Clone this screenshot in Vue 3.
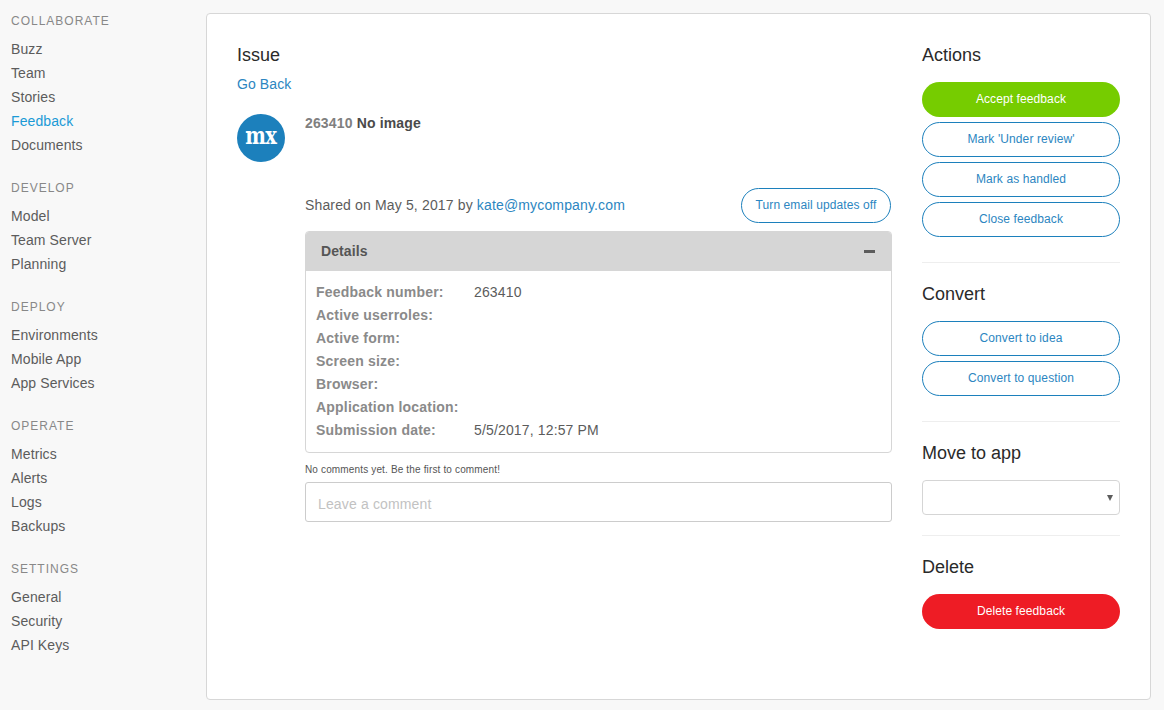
<template>
  <div class="page">
    <nav class="sidebar">
      <section v-for="group in navGroups" :key="group.title" class="nav-group">
        <h4>{{ group.title }}</h4>
        <a
          v-for="item in group.items"
          :key="item"
          href="#"
          :class="{ active: item === 'Feedback' }"
        >{{ item }}</a>
      </section>
    </nav>

    <main class="card">
      <div class="content">
        <h3 class="issue-title">Issue</h3>
        <a href="#" class="link back">Go Back</a>

        <div class="issue-head">
          <div class="avatar"><span>mx</span></div>
          <div class="issue-name"><span>263410</span> No image</div>
        </div>

        <div class="issue-body">
          <div class="shared">
            <p>Shared on May 5, 2017 by <a href="#" class="link">kate@mycompany.com</a></p>
            <button class="btn outline email">Turn email updates off</button>
          </div>

          <div class="panel">
            <div class="panel-head">
              <strong>Details</strong>
              <span class="collapse"></span>
            </div>
            <dl class="details">
              <template v-for="row in details" :key="row.label">
                <dt>{{ row.label }}</dt>
                <dd>{{ row.value }}</dd>
              </template>
            </dl>
          </div>

          <p class="no-comments">No comments yet. Be the first to comment!</p>
          <input class="comment" type="text" placeholder="Leave a comment" />
        </div>
      </div>

      <aside class="actions">
        <h3>Actions</h3>
        <div class="btn-stack">
          <button class="btn accept">Accept feedback</button>
          <button class="btn outline">Mark 'Under review'</button>
          <button class="btn outline">Mark as handled</button>
          <button class="btn outline">Close feedback</button>
        </div>
        <hr />
        <h3>Convert</h3>
        <div class="btn-stack">
          <button class="btn outline">Convert to idea</button>
          <button class="btn outline">Convert to question</button>
        </div>
        <hr />
        <h3>Move to app</h3>
        <div class="select-wrap">
          <select></select>
          <span class="caret"></span>
        </div>
        <hr class="tight" />
        <h3>Delete</h3>
        <button class="btn danger">Delete feedback</button>
      </aside>
    </main>
  </div>
</template>

<script setup>
const navGroups = [
  { title: 'COLLABORATE', items: ['Buzz', 'Team', 'Stories', 'Feedback', 'Documents'] },
  { title: 'DEVELOP', items: ['Model', 'Team Server', 'Planning'] },
  { title: 'DEPLOY', items: ['Environments', 'Mobile App', 'App Services'] },
  { title: 'OPERATE', items: ['Metrics', 'Alerts', 'Logs', 'Backups'] },
  { title: 'SETTINGS', items: ['General', 'Security', 'API Keys'] }
]

const details = [
  { label: 'Feedback number:', value: '263410' },
  { label: 'Active userroles:', value: '' },
  { label: 'Active form:', value: '' },
  { label: 'Screen size:', value: '' },
  { label: 'Browser:', value: '' },
  { label: 'Application location:', value: '' },
  { label: 'Submission date:', value: '5/5/2017, 12:57 PM' }
]
</script>

<style>
body {
  background: #f8f8f8;
}
</style>

<style scoped>
.page {
  display: flex;
  align-items: flex-start;
  padding: 13px 13px 10px 0;
  font-family: 'Liberation Sans', Arial, sans-serif;
  font-size: 14px;
  letter-spacing: 0.1px;
  color: #5c5c5c;
}

.sidebar {
  width: 206px;
  flex-shrink: 0;
  padding-left: 11px;
  box-sizing: border-box;
}

.nav-group {
  display: flex;
  flex-direction: column;
  margin-bottom: 23px;
}

.nav-group h4 {
  margin: 1px 0 9px;
  font-size: 12px;
  font-weight: 400;
  line-height: 14px;
  letter-spacing: 1px;
  color: #888;
}

.nav-group a {
  line-height: 24px;
  color: #5c5c5c;
  text-decoration: none;
}

.nav-group a.active {
  color: #1b9ad6;
}

.card {
  flex: 1;
  height: 687px;
  box-sizing: border-box;
  display: flex;
  padding: 30px 30px 0;
  background: #fff;
  border: 1px solid #d7d7d7;
  border-radius: 4px;
}

.content {
  width: 655px;
  flex-shrink: 0;
}

h3 {
  margin: 0;
  font-size: 18px;
  font-weight: 400;
  line-height: 22px;
  letter-spacing: 0;
  color: #2a2a2a;
}

.link {
  color: #2c86c1;
  text-decoration: none;
}

.back {
  display: block;
  margin-top: 8px;
  line-height: 20px;
}

.issue-head {
  display: flex;
  gap: 20px;
  margin-top: 20px;
}

.avatar {
  width: 48px;
  height: 48px;
  flex-shrink: 0;
  display: flex;
  align-items: center;
  justify-content: center;
  border-radius: 50%;
  background: #1c80bc;
  color: #fff;
}

.avatar span {
  font-family: 'DejaVu Serif', serif;
  font-size: 25px;
  font-weight: 700;
  letter-spacing: -1px;
  line-height: 40px;
  margin-bottom: 4px;
  transform: scaleX(0.78);
}

.issue-name {
  padding-top: 1px;
  line-height: 16px;
  font-weight: 700;
  letter-spacing: 0.15px;
  color: #4a4a4a;
}

.issue-name span {
  color: #808080;
}

.issue-body {
  margin: 26px 0 0 68px;
  width: 587px;
}

.shared {
  display: flex;
  align-items: center;
  justify-content: space-between;
  padding-right: 1px;
}

.shared p {
  margin: 0 0 2px;
  letter-spacing: 0.15px;
}

.btn {
  display: block;
  width: 100%;
  height: 35px;
  box-sizing: border-box;
  border: 1px solid transparent;
  border-radius: 18px;
  font-family: inherit;
  font-size: 12px;
  letter-spacing: 0.1px;
  padding: 0 0 2px;
  cursor: pointer;
}

.btn.outline {
  background: #fff;
  border-color: #1c80bc;
  color: #2c86c1;
}

.btn.email {
  width: 150px;
}

.btn.accept {
  background: #76cc00;
  color: #fff;
}

.btn.danger {
  background: #ee1c25;
  color: #fff;
}

.panel {
  margin-top: 8px;
  border: 1px solid #d6d6d6;
  border-radius: 4px;
  overflow: hidden;
}

.panel-head {
  display: flex;
  align-items: center;
  justify-content: space-between;
  height: 39px;
  padding: 0 16px 0 15px;
  background: #d6d6d6;
  color: #555;
}

.panel-head strong {
  margin-bottom: 2px;
}

.collapse {
  width: 11px;
  height: 3px;
  background: #5c5c5c;
}

.details {
  display: grid;
  grid-template-columns: 158px 1fr;
  margin: 0;
  padding: 10px 10px 10px;
  line-height: 23px;
  letter-spacing: 0.2px;
}

.details dt {
  font-weight: 700;
  color: #8a8a8a;
}

.details dd {
  margin: 0;
  letter-spacing: 0.15px;
  color: #5c5c5c;
}

.no-comments {
  margin: 11px 0 0;
  font-size: 10px;
  line-height: 12px;
  letter-spacing: 0.15px;
  color: #555;
}

.comment {
  display: block;
  width: 100%;
  height: 40px;
  box-sizing: border-box;
  margin-top: 6px;
  padding: 3px 12px 0;
  border: 1px solid #ccc;
  border-radius: 3px;
  font-family: inherit;
  font-size: 14px;
  letter-spacing: 0.15px;
  outline: none;
}

.comment::placeholder {
  color: #c2c2c2;
}

.actions {
  width: 198px;
  margin-left: 30px;
  flex-shrink: 0;
}

.btn-stack {
  display: flex;
  flex-direction: column;
  gap: 5px;
  margin-top: 16px;
}

.actions hr {
  margin: 25px 0 20px;
  border: none;
  border-top: 1px solid #eee;
}

.actions hr.tight {
  margin: 20px 0 20px;
}

.select-wrap {
  position: relative;
  margin-top: 16px;
}

.select-wrap select {
  display: block;
  width: 100%;
  height: 35px;
  appearance: none;
  background: #fff;
  border: 1px solid #d5d5d5;
  border-radius: 4px;
}

.caret {
  position: absolute;
  right: 7px;
  top: 15px;
  width: 0;
  height: 0;
  border-left: 3px solid transparent;
  border-right: 3px solid transparent;
  border-top: 6px solid #5c5c5c;
}

.btn.danger {
  margin-top: 16px;
}
</style>
